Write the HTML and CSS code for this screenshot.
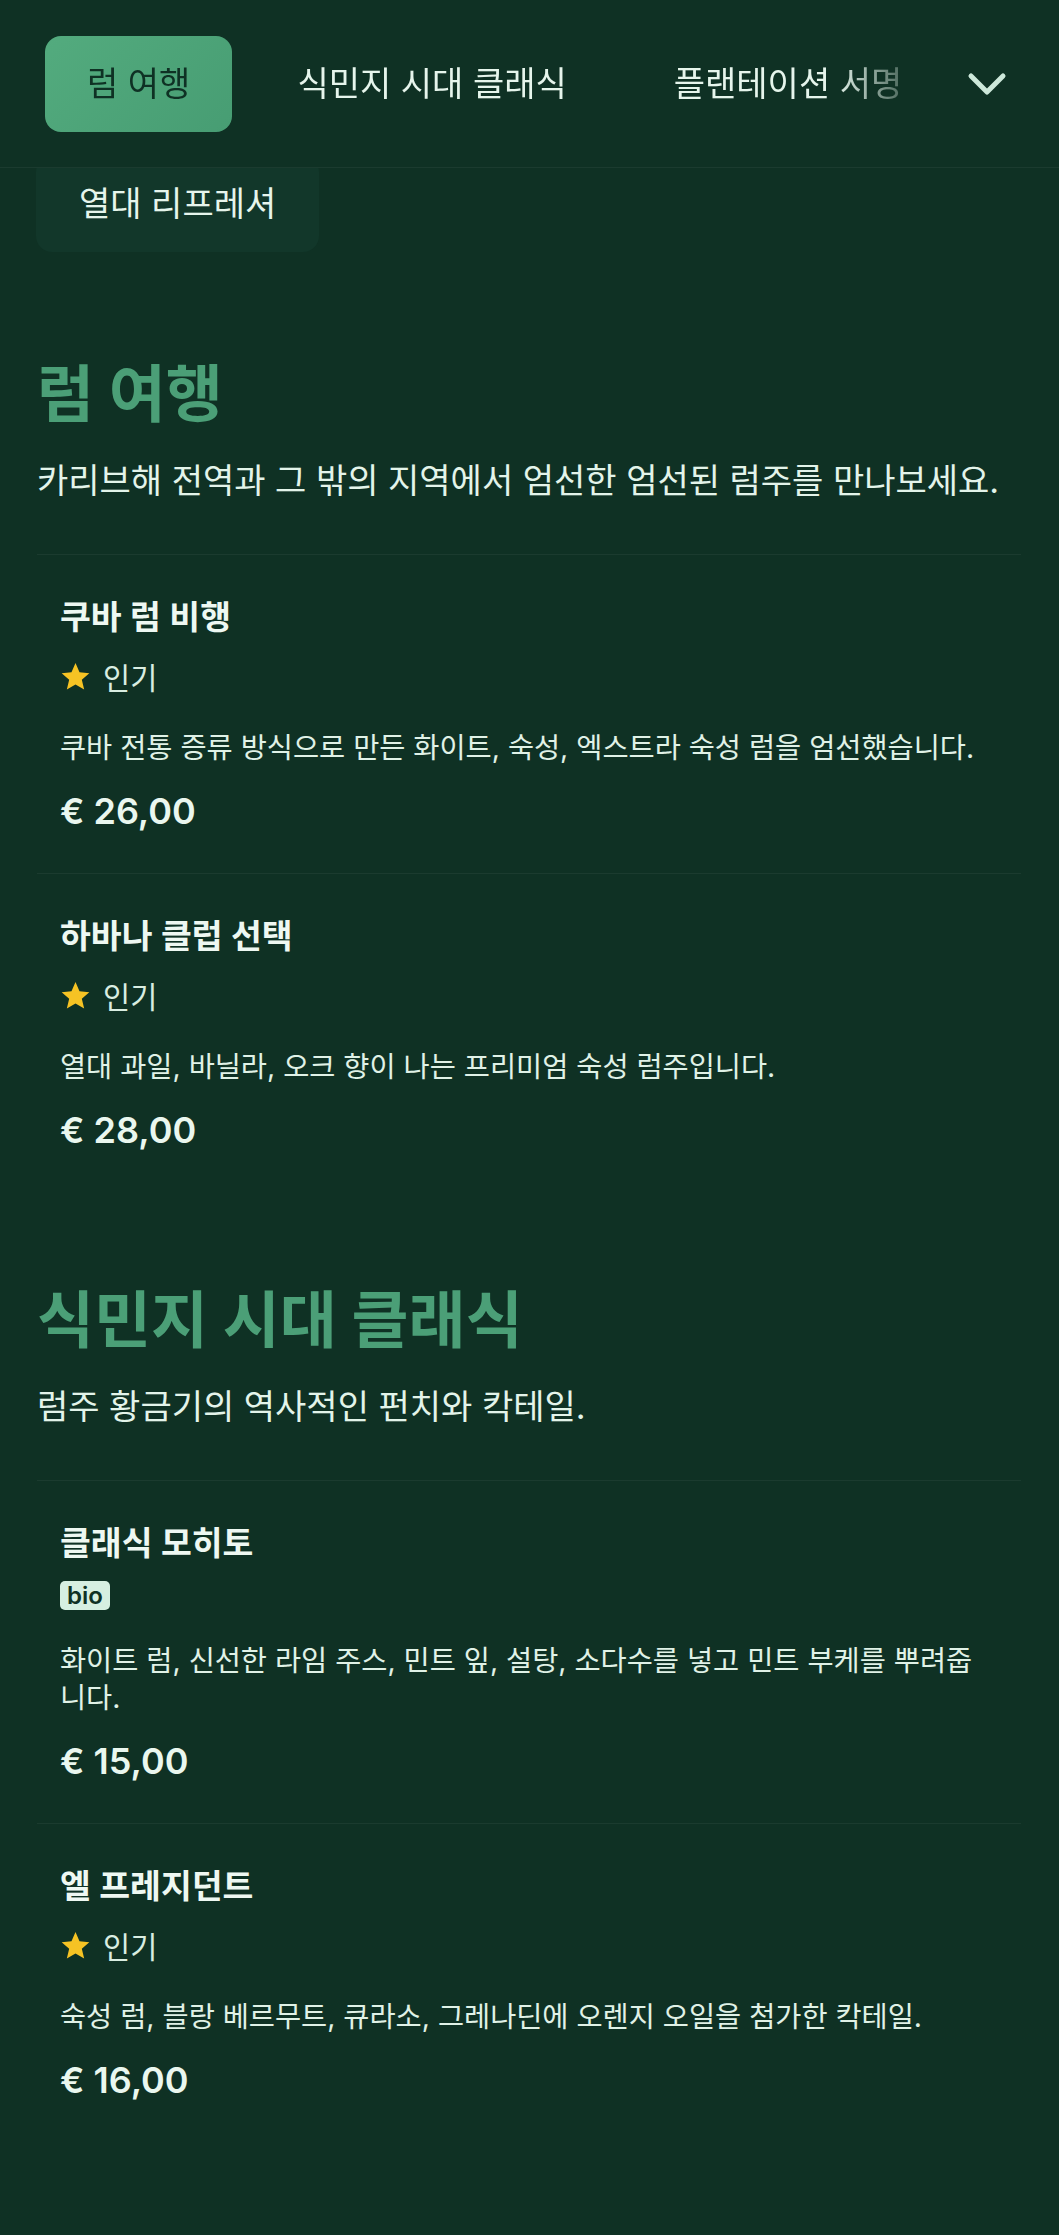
FILE: index.html
```html
<!DOCTYPE html>
<html lang="ko">
<head>
<meta charset="utf-8">
<title>메뉴</title>
<link rel="stylesheet" href="styles.css">
</head>
<body>
<header class="topbar">
  <nav class="tabs">
    <a class="tab tab-active">럼 여행</a>
    <a class="tab">식민지 시대 클래식</a>
    <a class="tab">플랜테이션 서명</a>
  </nav>
  <button class="toggle" aria-label="펼치기">
    <svg width="40" height="24" viewBox="0 0 40 24"><polyline points="4,4 20,20 36,4" fill="none" stroke="#cde8da" stroke-width="5" stroke-linecap="round" stroke-linejoin="round"/></svg>
  </button>
</header>
<div class="more-row">
  <a class="tab tab-muted">열대 리프레셔</a>
</div>

<main class="menu">
  <section class="category">
    <h2 class="cat-title">럼 여행</h2>
    <p class="cat-desc">카리브해 전역과 그 밖의 지역에서 엄선한 엄선된 럼주를 만나보세요.</p>
    <ul class="items">
      <li class="item">
        <h3 class="item-name">쿠바 럼 비행</h3>
        <div class="tags"><span class="popular"><svg class="star" viewBox="0 0 24 24"><path d="M12 1.6l3.1 7.1 7.6.7-5.8 5.1 1.8 7.6L12 18.1l-6.7 4 1.8-7.6-5.8-5.1 7.6-.7z"/></svg>인기</span></div>
        <p class="item-desc">쿠바 전통 증류 방식으로 만든 화이트, 숙성, 엑스트라 숙성 럼을 엄선했습니다.</p>
        <div class="price">€ 26,00</div>
      </li>
      <li class="item">
        <h3 class="item-name">하바나 클럽 선택</h3>
        <div class="tags"><span class="popular"><svg class="star" viewBox="0 0 24 24"><path d="M12 1.6l3.1 7.1 7.6.7-5.8 5.1 1.8 7.6L12 18.1l-6.7 4 1.8-7.6-5.8-5.1 7.6-.7z"/></svg>인기</span></div>
        <p class="item-desc">열대 과일, 바닐라, 오크 향이 나는 프리미엄 숙성 럼주입니다.</p>
        <div class="price">€ 28,00</div>
      </li>
    </ul>
  </section>

  <section class="category">
    <h2 class="cat-title">식민지 시대 클래식</h2>
    <p class="cat-desc">럼주 황금기의 역사적인 펀치와 칵테일.</p>
    <ul class="items">
      <li class="item">
        <h3 class="item-name">클래식 모히토</h3>
        <div class="tags"><span class="bio">bio</span></div>
        <p class="item-desc">화이트 럼, 신선한 라임 주스, 민트 잎, 설탕, 소다수를 넣고 민트 부케를 뿌려줍니다.</p>
        <div class="price">€ 15,00</div>
      </li>
      <li class="item">
        <h3 class="item-name">엘 프레지던트</h3>
        <div class="tags"><span class="popular"><svg class="star" viewBox="0 0 24 24"><path d="M12 1.6l3.1 7.1 7.6.7-5.8 5.1 1.8 7.6L12 18.1l-6.7 4 1.8-7.6-5.8-5.1 7.6-.7z"/></svg>인기</span></div>
        <p class="item-desc">숙성 럼, 블랑 베르무트, 큐라소, 그레나딘에 오렌지 오일을 첨가한 칵테일.</p>
        <div class="price">€ 16,00</div>
      </li>
    </ul>
  </section>
</main>
</body>
</html>
```

FILE: styles.css
```css
* { box-sizing: border-box; }

html, body {
  margin: 0;
  padding: 0;
}

body {
  background: #0f3124;
  color: #e3f4ea;
  font-family: "Inter", "Noto Sans CJK KR", sans-serif;
  min-height: 2235px;
}

.topbar {
  position: relative;
  z-index: 2;
  height: 168px;
  display: flex;
  align-items: center;
  padding: 0 32px 0 45px;
  background: #0f3124;
  border-bottom: 1px solid rgba(255, 255, 255, 0.05);
}

.tabs {
  flex: 1;
  min-width: 0;
  display: flex;
  gap: 23px;
  overflow: hidden;
  -webkit-mask-image: linear-gradient(to right, #000 calc(100% - 95px), transparent 100%);
  mask-image: linear-gradient(to right, #000 calc(100% - 95px), transparent 100%);
}

.tab {
  flex-shrink: 0;
  display: block;
  height: 96px;
  line-height: 96px;
  padding: 0 42px;
  border-radius: 16px;
  font-size: 34px;
  font-weight: 400;
  white-space: nowrap;
  color: #e6f5ec;
}

.tab-active {
  background: linear-gradient(135deg, #53ab7e, #479d73);
  color: #0f3124;
}

.tab-muted {
  background: #12372a;
  padding: 0 43px;
}

.toggle {
  flex-shrink: 0;
  width: 80px;
  height: 80px;
  margin-left: 17px;
  padding: 0;
  border: 0;
  background: transparent;
  display: flex;
  align-items: center;
  justify-content: center;
}

.more-row {
  display: flex;
  margin: -12px 0 0 36px;
}

.menu {
  padding: 109px 38px 0 37px;
}

.category + .category {
  margin-top: 95px;
}

.cat-title {
  margin: 0 0 29px;
  font-size: 62px;
  line-height: 68px;
  font-weight: 700;
  color: #4b9f77;
}

.cat-desc {
  margin: 0 0 50px;
  font-size: 34px;
  line-height: 46px;
  color: #e3f4ea;
}

.items {
  list-style: none;
  margin: 0;
  padding: 0;
}

.item {
  border-top: 1px solid rgba(255, 255, 255, 0.05);
  padding: 43px 30px 40px 23px;
}

.item-name {
  margin: 0 0 18px;
  font-size: 33.5px;
  line-height: 39px;
  font-weight: 600;
  color: #eef8f2;
}

.tags {
  display: flex;
  align-items: center;
  gap: 10px;
}

.popular {
  display: flex;
  align-items: center;
  gap: 12px;
  height: 42px;
  font-size: 29.5px;
  color: #d9ede1;
}

.star {
  width: 31px;
  height: 31px;
  fill: #f6c324;
}

.bio {
  display: inline-block;
  height: 29px;
  line-height: 29px;
  padding: 0 7px;
  border-radius: 5px;
  background: #d6efe1;
  color: #0f3124;
  font-size: 24px;
  font-weight: 600;
}

.item-desc {
  margin: 32px 0 23px;
  font-size: 28.4px;
  line-height: 37px;
  color: #e0f2e7;
}

.price {
  font-size: 36px;
  line-height: 44px;
  font-weight: 600;
  color: #eaf7ef;
}
```
